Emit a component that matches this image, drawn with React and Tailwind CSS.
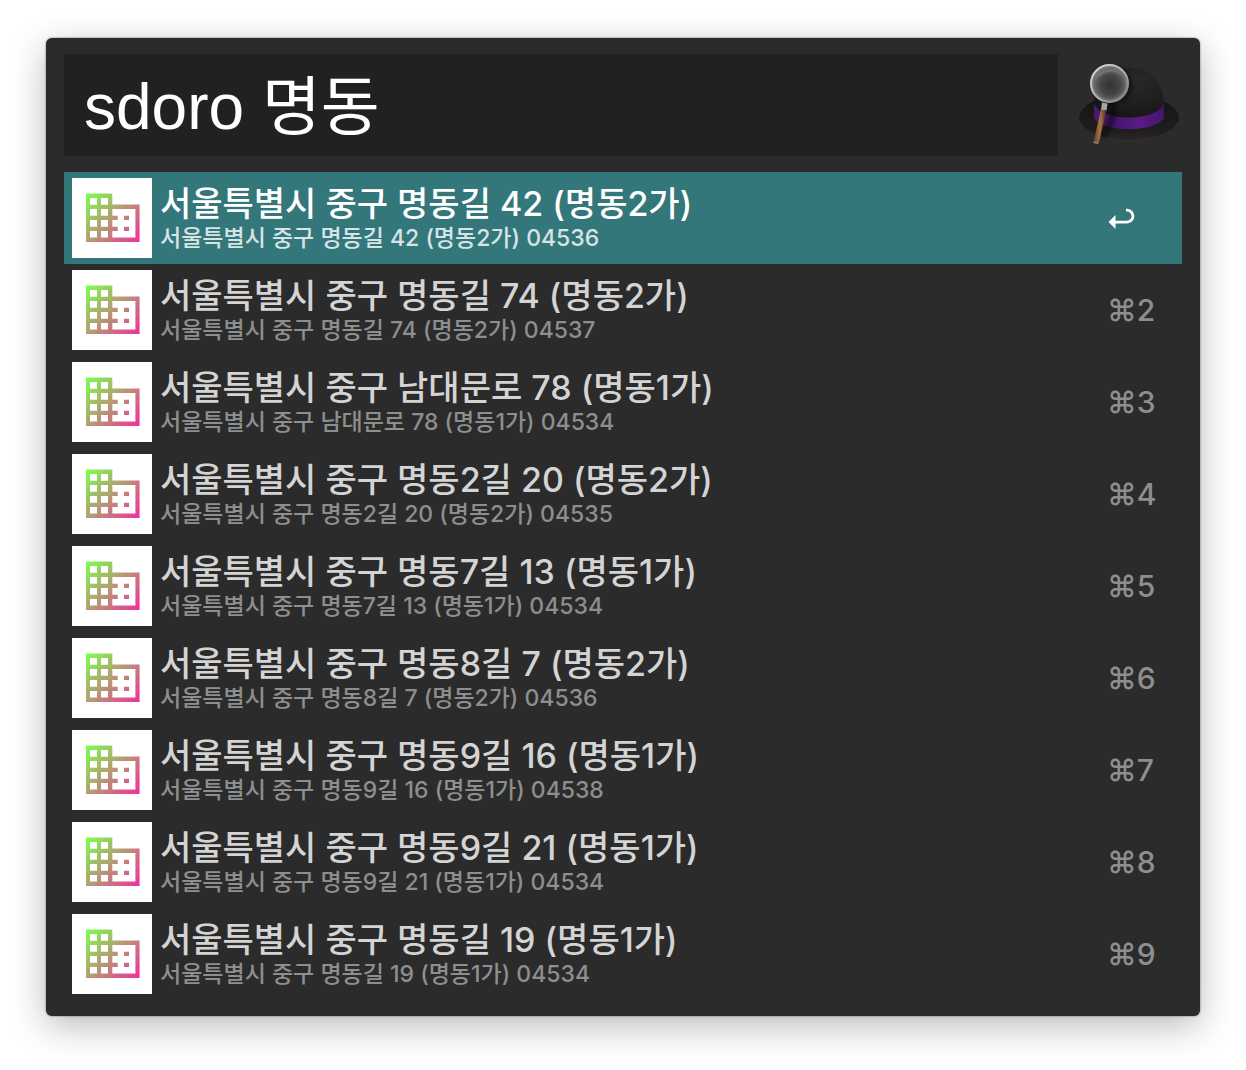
import React, { useState } from "react";

const results = [
  { title: "서울특별시 중구 명동길 42 (명동2가)", zip: "04536" },
  { title: "서울특별시 중구 명동길 74 (명동2가)", zip: "04537" },
  { title: "서울특별시 중구 남대문로 78 (명동1가)", zip: "04534" },
  { title: "서울특별시 중구 명동2길 20 (명동2가)", zip: "04535" },
  { title: "서울특별시 중구 명동7길 13 (명동1가)", zip: "04534" },
  { title: "서울특별시 중구 명동8길 7 (명동2가)", zip: "04536" },
  { title: "서울특별시 중구 명동9길 16 (명동1가)", zip: "04538" },
  { title: "서울특별시 중구 명동9길 21 (명동1가)", zip: "04534" },
  { title: "서울특별시 중구 명동길 19 (명동1가)", zip: "04534" },
];

function BuildingIcon({ id }) {
  return (
    <svg viewBox="0 0 80 80" className="size-20 shrink-0 bg-white" aria-hidden="true">
      <defs>
        <linearGradient id={id} gradientUnits="userSpaceOnUse" x1="16" y1="15" x2="67" y2="64">
          <stop offset="0" stopColor="#7dff4f" />
          <stop offset="1" stopColor="#f0309c" />
        </linearGradient>
      </defs>
      <path
        fill={`url(#${id})`}
        fillRule="evenodd"
        d="M14 15.400H40.300V26.400H67.600V64H14Z
          M18 20h7v6.700h-7z M29 20h7v6.700h-7z
          M18 31h7v6.700h-7z M29 31h7v6.700h-7z
          M18 42h7v6.700h-7z M29 42h7v6.700h-7z
          M18 53h7v6.500h-7z M29 53h7v6.500h-7z
          M40.300 31H63.400V59.500H40.300V53H45.700V48.700H40.300V42H45.700V37.700H40.300Z
          M52 37.700h5v4.300h-5z M52 48.700h5v4.300h-5z"
      />
    </svg>
  );
}

function ReturnIcon() {
  return (
    <svg viewBox="0 0 28 22" className="h-[22px] w-7" aria-label="Return" role="img">
      <path d="M8 15.100h12a5.400 5.400 0 0 0 0-11.900h-1" fill="none" stroke="#fff" strokeWidth="2.8" />
      <path d="M1.500 14.900 8.500 8v14z" fill="#fff" />
    </svg>
  );
}

function HatLogo() {
  return (
    <svg viewBox="-2 14 124 102" className="h-[102px] w-[124px] shrink-0" aria-hidden="true">
      <defs>
        <radialGradient id="crown" cx="0.6" cy="0.25" r="0.75">
          <stop offset="0" stopColor="#2b2829" />
          <stop offset="0.6" stopColor="#211e1f" />
          <stop offset="1" stopColor="#171516" />
        </radialGradient>
        <linearGradient id="brim" x1="0" y1="0" x2="0" y2="1">
          <stop offset="0" stopColor="#161415" />
          <stop offset="0.75" stopColor="#201d1e" />
          <stop offset="1" stopColor="#2b2829" />
        </linearGradient>
        <linearGradient id="band" x1="0" y1="0" x2="1" y2="0">
          <stop offset="0" stopColor="#4a1a6e" />
          <stop offset="0.25" stopColor="#43156a" />
          <stop offset="0.65" stopColor="#5a1b86" />
          <stop offset="1" stopColor="#43156a" />
        </linearGradient>
        <radialGradient id="lens" cx="0.52" cy="0.55" r="0.55">
          <stop offset="0" stopColor="#333" />
          <stop offset="0.5" stopColor="#454545" />
          <stop offset="1" stopColor="#7a7a7a" />
        </radialGradient>
        <linearGradient id="rim" x1="0" y1="0" x2="1" y2="1">
          <stop offset="0" stopColor="#dcdcdc" />
          <stop offset="0.5" stopColor="#b4b4b4" />
          <stop offset="0.85" stopColor="#8a8a8a" />
          <stop offset="1" stopColor="#d8d8d8" />
        </linearGradient>
        <linearGradient id="wood" x1="0" y1="0" x2="1" y2="0">
          <stop offset="0.1" stopColor="#6b4429" />
          <stop offset="0.5" stopColor="#a8764e" />
          <stop offset="0.9" stopColor="#5c3a22" />
        </linearGradient>
        <filter id="soft" x="-50%" y="-50%" width="200%" height="200%">
          <feGaussianBlur stdDeviation="2" />
        </filter>
      </defs>
      <path d="M19 78C19 70 27 64 35 61H103C112 65 119 71 119 78C119 91 96 101 69 101S19 91 19 78Z" fill="url(#brim)" />
      <path d="M20 82C25 93 45 101 69 101S113 93 118 82" fill="none" stroke="#383536" strokeWidth="0.7" />
      <path d="M34 66C34 42 44 27.500 69 27.500C92 27.500 104 42 104 66V70C94 82 44 82 34 70Z" fill="url(#crown)" />
      <path d="M34 64C43 82 95 82 104 64V78C95 93 43 93 34 78Z" fill="url(#band)" />
      <path d="M50 62C56 68 53 82 42 97" stroke="#000" strokeOpacity="0.5" strokeWidth="6" fill="none" filter="url(#soft)" />
      <circle cx="53" cy="45" r="19" fill="#000" opacity="0.5" filter="url(#soft)" />
      <circle cx="49.500" cy="43.500" r="17.500" fill="url(#lens)" />
      <path d="M35 40C38 29 56 25 63 36C56 30 44 30 35 40Z" fill="#b5b5b5" opacity="0.2" />
      <circle cx="49.500" cy="43.500" r="17" fill="none" stroke="#777" strokeWidth="2" />
      <circle cx="49.500" cy="43.500" r="18.500" fill="none" stroke="url(#rim)" strokeWidth="2" />
      <path d="M42 62.500 47.500 63.500 46.500 70.500 41 70Z" fill="#a5a5a5" />
      <path d="M41 69.500 46.500 70.500 38.800 102.500 33.500 101.500Z" fill="url(#wood)" />
      <path d="M33.500 101.200 38.800 102.200 38 104 33.500 103Z" fill="#8d8378" />
    </svg>
  );
}

export default function App() {
  const [query, setQuery] = useState("sdoro 명동");
  const [selected, setSelected] = useState(0);

  return (
    <div className="min-h-screen bg-white px-[46px] pt-[38px] pb-[54px] font-['Inter','Noto_Sans_CJK_KR',sans-serif]">
      <main className="rounded-md bg-[#2b2b2b] px-[18px] py-4 shadow-[0_0_2px_rgba(0,0,0,0.6),0_10px_36px_rgba(0,0,0,0.28)]">
        <div className="flex items-center">
          <input
            type="text"
            aria-label="Search"
            value={query}
            onChange={(e) => setQuery(e.target.value)}
            className="h-[102px] min-w-0 flex-1 bg-[#212121] px-5 pb-2 font-['Liberation_Sans','Noto_Sans_CJK_KR',sans-serif] text-[64px] text-white outline-none"
          />
          <HatLogo />
        </div>
        <ul className="mt-4">
          {results.map((item, i) => {
            const active = i === selected;
            return (
              <li key={item.title}>
                <button
                  type="button"
                  onClick={() => setSelected(i)}
                  className={`flex w-full items-center gap-2 px-2 py-1.5 text-left ${active ? "bg-[#34777b]" : ""}`}
                >
                  <BuildingIcon id={`building-${i}`} />
                  <span className="flex min-w-0 flex-1 flex-col font-medium">
                    <span className={`truncate text-[34px] leading-10 ${active ? "text-white" : "text-[#d4d4d4]"}`}>
                      {item.title}
                    </span>
                    <span className={`truncate text-[23px] leading-7 ${active ? "text-[#d6e4e5]" : "text-[#8e8e8e]"}`}>
                      {item.title} {item.zip}
                    </span>
                  </span>
                  <span className="w-[67px] text-[30px] font-medium text-[#8e8e8e]">
                    {active ? <ReturnIcon /> : `⌘${i + 1}`}
                  </span>
                </button>
              </li>
            );
          })}
        </ul>
      </main>
    </div>
  );
}
